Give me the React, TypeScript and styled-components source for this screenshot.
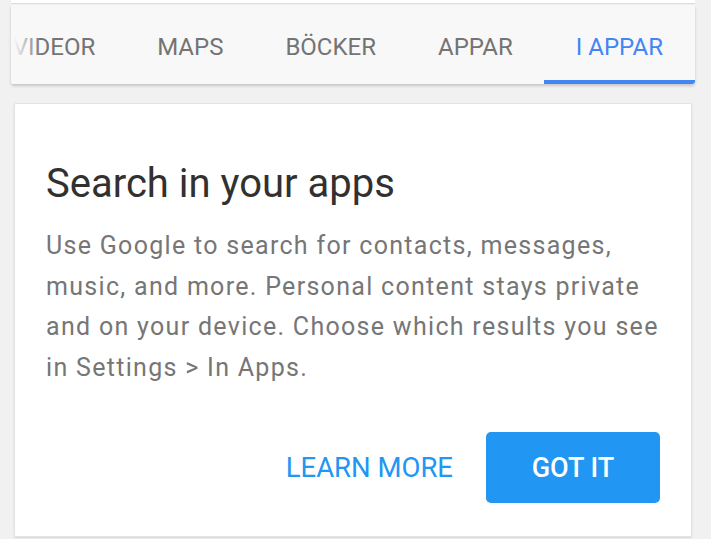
import styled, { createGlobalStyle } from "styled-components";

const GlobalStyle = createGlobalStyle`
  html, body {
    margin: 0;
    padding: 0;
    background: #f1f1f1;
    font-family: Roboto, "Noto Sans", "Liberation Sans", sans-serif;
  }
  * {
    box-sizing: border-box;
  }
`;

const tabs = [
  { label: "VIDEOR", active: false },
  { label: "MAPS", active: false },
  { label: "BÖCKER", active: false },
  { label: "APPAR", active: false },
  { label: "I APPAR", active: true },
];

const bodyLines = [
  "Use Google to search for contacts, messages,",
  "music, and more. Personal content stays private",
  "and on your device. Choose which results you see",
  "in Settings > In Apps.",
];

const Page = styled.div`
  width: 711px;
  height: 539px;
  overflow: hidden;
  display: flex;
  flex-direction: column;
`;

const TopCard = styled.div`
  margin: 0 16px 0 11px;
  height: 4px;
  background: #ffffff;
  border-bottom: 1px solid #dcdcdc;
`;

const TabBar = styled.div`
  position: relative;
  margin: 1px 16px 0 11px;
  height: 79px;
  background: #f8f8f8;
  border-radius: 0 0 3px 3px;
  box-shadow: 0 2px 3px rgba(0, 0, 0, 0.18);
  overflow: hidden;
`;

const TabRow = styled.div`
  display: flex;
  justify-content: flex-end;
  height: 100%;
`;

const Tab = styled.div<{ $active: boolean }>`
  flex: none;
  display: flex;
  align-items: center;
  justify-content: center;
  height: 100%;
  padding: 8px ${(p) => (p.$active ? 32 : 31)}px 0;
  font-size: 24px;
  color: ${(p) => (p.$active ? "#4285f4" : "#747474")};
  border-bottom: 4px solid ${(p) => (p.$active ? "#4285f4" : "transparent")};
`;

const Fade = styled.div`
  position: absolute;
  left: 0;
  top: 0;
  bottom: 0;
  width: 30px;
  background: linear-gradient(to right, #f8f8f8 10%, rgba(248, 248, 248, 0));
`;

const Card = styled.div`
  margin: 19px 19px 0 14px;
  background: #ffffff;
  border: 1px solid #e4e4e4;
  border-radius: 2px;
  box-shadow: 0 1px 2px rgba(0, 0, 0, 0.12);
  padding: 56px 31px 33px 31px;
`;

const Title = styled.h1`
  margin: 0;
  font-size: 40px;
  line-height: 48px;
  font-weight: 400;
  color: #313131;
`;

const Body = styled.p`
  margin: 18px 0 0;
  font-size: 25px;
  line-height: 40.5px;
  letter-spacing: 1.3px;
  white-space: nowrap;
  color: #767676;
`;

const Actions = styled.div`
  display: flex;
  justify-content: flex-end;
  align-items: center;
  gap: 33px;
  margin-top: 44px;
`;

const TextButton = styled.button`
  border: none;
  background: none;
  padding: 0;
  font-family: inherit;
  font-size: 27.5px;
  color: #2196f3;
`;

const FilledButton = styled.button`
  border: none;
  width: 174px;
  height: 71px;
  border-radius: 5px;
  background: #2196f3;
  color: #ffffff;
  font-family: inherit;
  font-size: 27px;
  font-weight: 500;
`;

export default function App() {
  return (
    <Page>
      <GlobalStyle />
      <TopCard />
      <TabBar>
        <TabRow>
          {tabs.map((t) => (
            <Tab key={t.label} $active={t.active}>
              {t.label}
            </Tab>
          ))}
        </TabRow>
        <Fade />
      </TabBar>
      <Card>
        <Title>Search in your apps</Title>
        <Body>
          {bodyLines.map((line, i) => (
            <span key={i}>
              {line}
              {i < bodyLines.length - 1 && <br />}
            </span>
          ))}
        </Body>
        <Actions>
          <TextButton>LEARN MORE</TextButton>
          <FilledButton>GOT IT</FilledButton>
        </Actions>
      </Card>
    </Page>
  );
}
